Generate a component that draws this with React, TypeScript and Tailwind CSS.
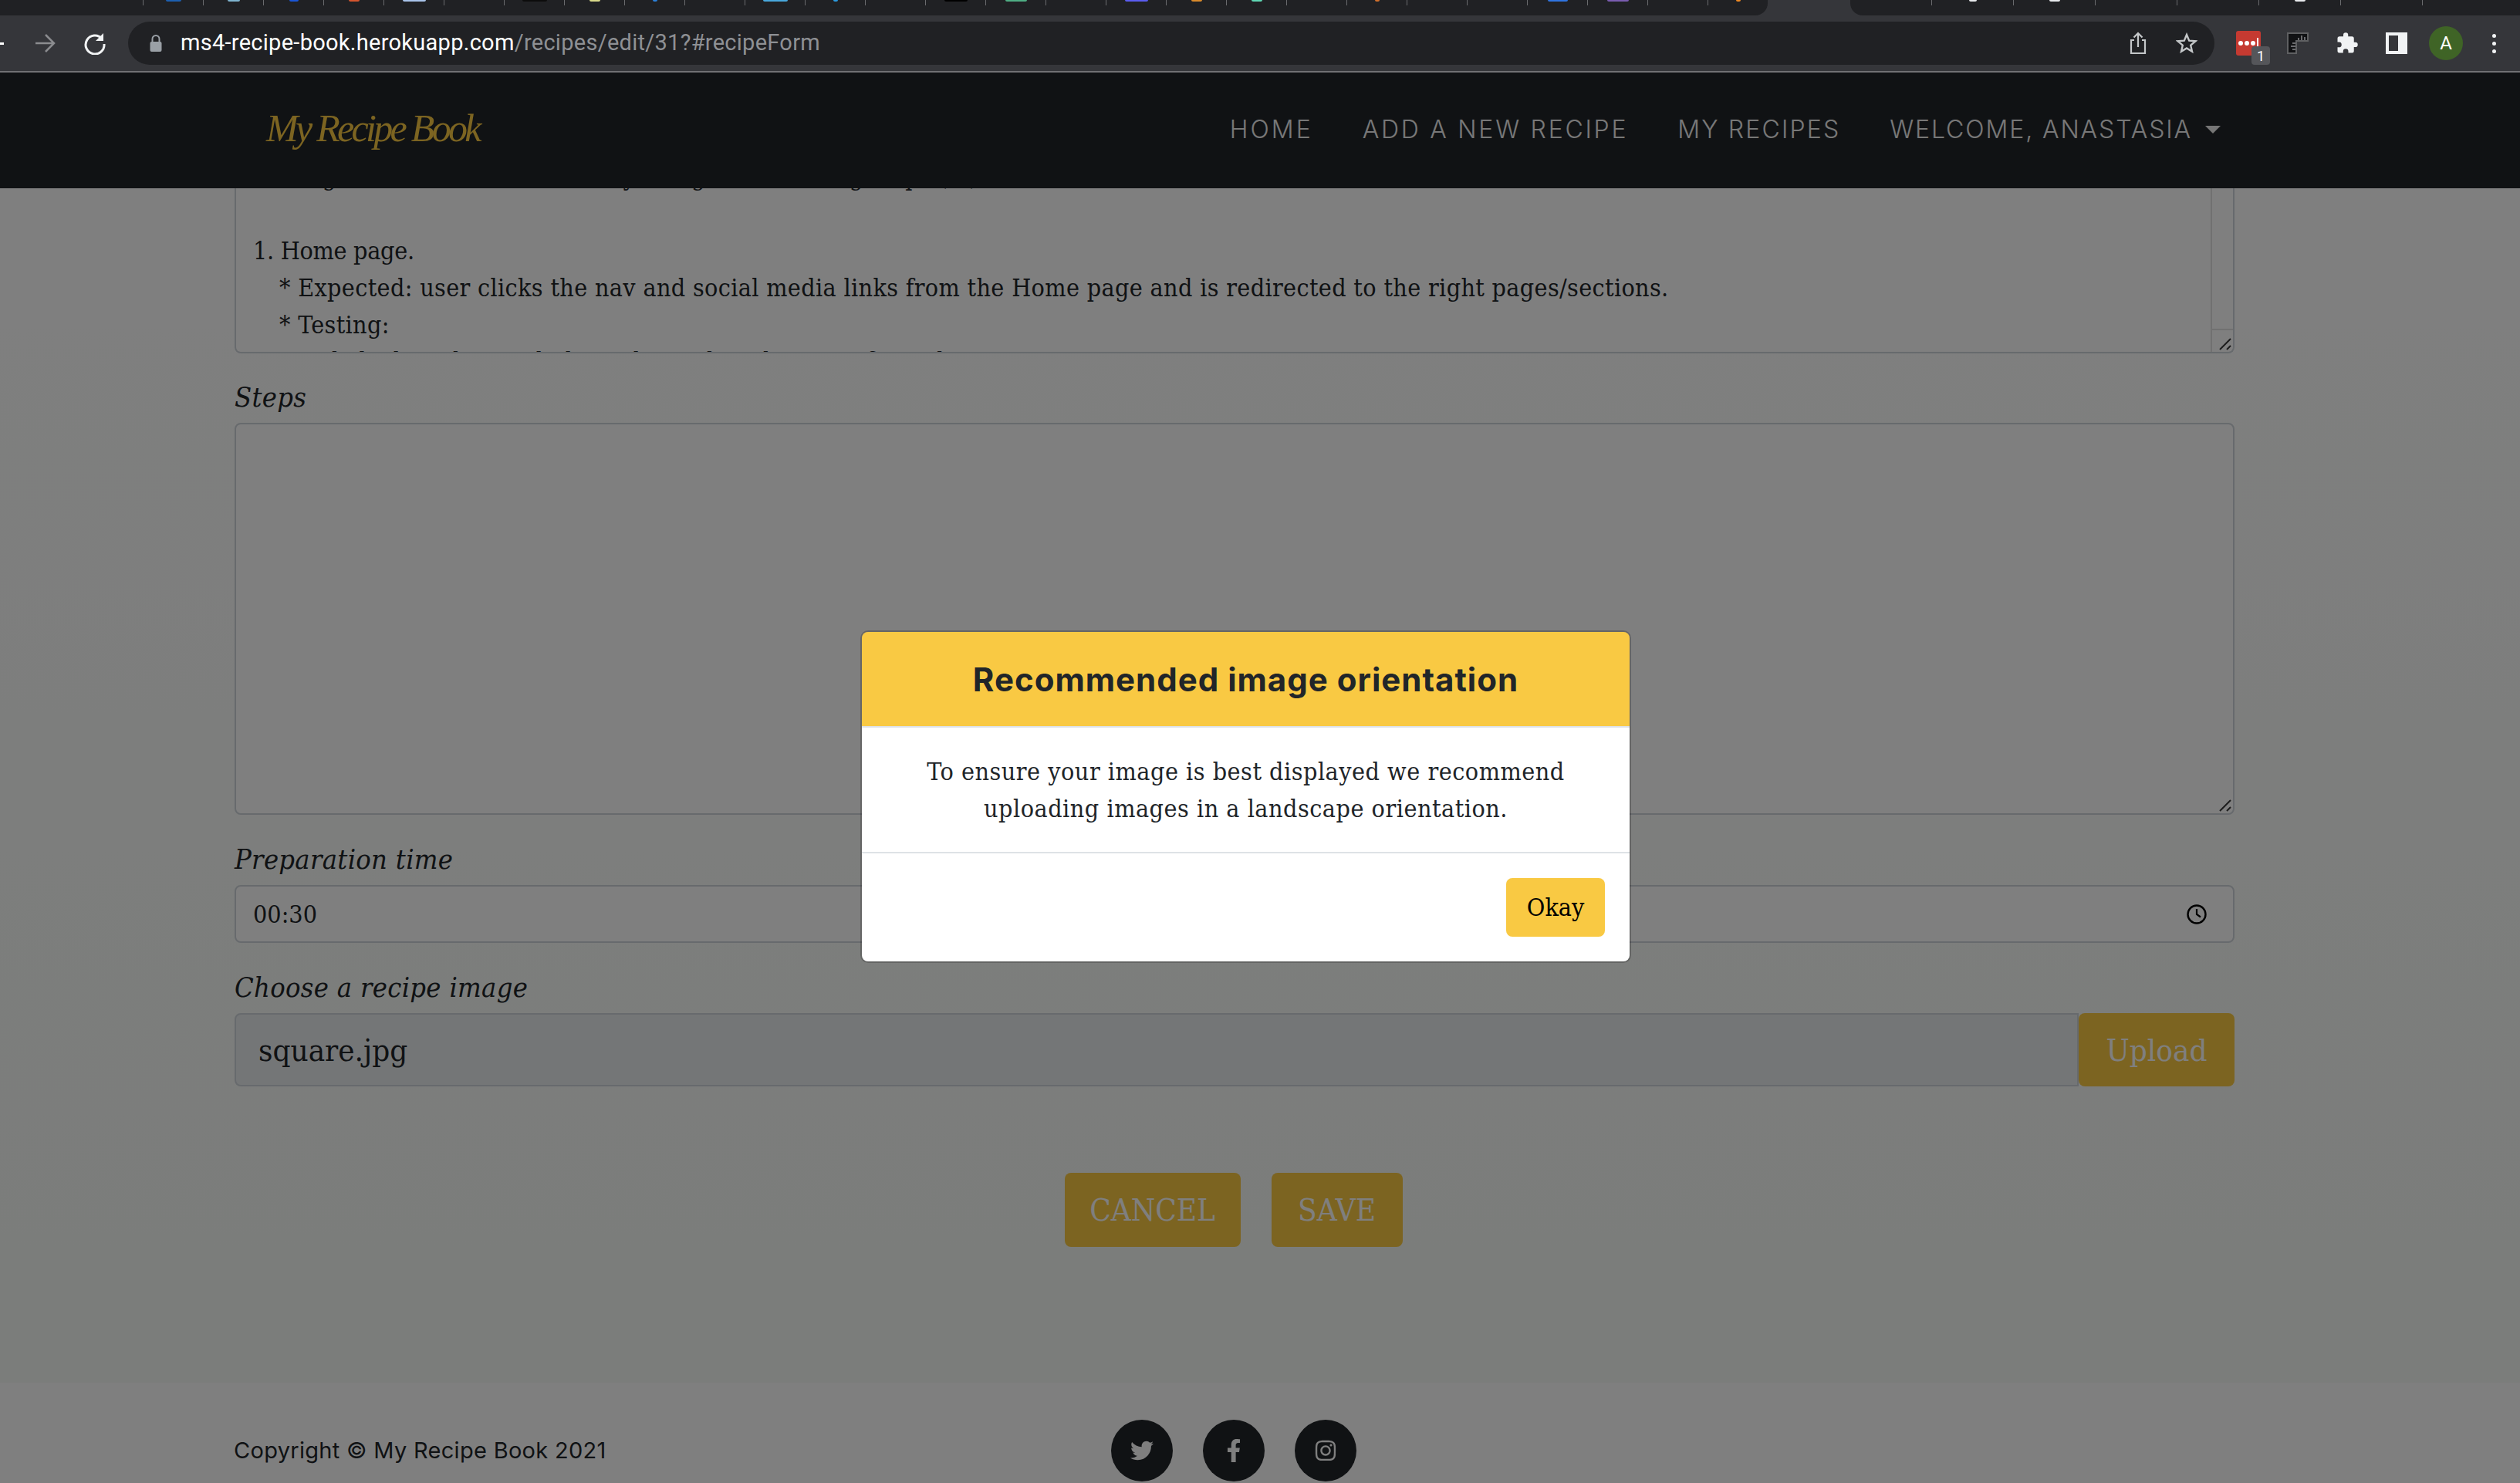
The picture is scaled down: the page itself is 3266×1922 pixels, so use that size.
import { FaFacebookF, FaInstagram, FaTwitter } from "react-icons/fa";

const slab = "font-['DejaVu_Serif_Condensed','DejaVu_Serif',serif]";
const sans = "font-['Inter','Open_Sans',sans-serif]";

const tabDots: Record<number, string> = {
  0: "w-[20px] bg-[#1c5fb0]",
  1: "w-[16px] bg-[#7fb4cf]",
  2: "w-[12px] bg-[#1a56d6]",
  3: "w-[14px] bg-[#d4552e]",
  4: "w-[30px] bg-[#a9c4ea]",
  6: "w-[32px] bg-[#0c0c0c]",
  7: "w-[14px] bg-[#d8d98a]",
  8: "w-[6px] bg-[#2b7fd8]",
  10: "w-[32px] bg-[#49a8dc]",
  11: "w-[6px] bg-[#2b9be0]",
  13: "w-[30px] bg-[#000000]",
  14: "w-[28px] bg-[#4fae84]",
  16: "w-[30px] bg-[#5a5cf0]",
  17: "w-[14px] bg-[#d98a2b]",
  18: "w-[14px] bg-[#5fd6b4]",
  20: "w-[6px] bg-[#d0702c]",
  23: "w-[26px] bg-[#2f74e0]",
  24: "w-[28px] bg-[#7a5cb0]",
  26: "w-[6px] bg-[#f08a24]",
};

const rightTabDots: Record<number, string> = { 0: "w-[10px]", 1: "w-[14px]", 4: "w-[14px]" };

function Grip() {
  return (
    <svg width="16" height="16" viewBox="0 0 16 16" className="block">
      <path d="M1 15 L15 1 M10 15 L15 10" stroke="#3a3a3a" strokeWidth="2" fill="none" />
    </svg>
  );
}

function TabStrip() {
  return (
    <div className="flex h-[20px] bg-[#35363a]">
      <div className="flex w-[2291px] rounded-br-[16px] bg-[#202124] pl-[185px]">
        {Array.from({ length: 27 }).map((_, i) => (
          <div key={i} className="flex h-[7px] w-[78px] justify-center border-l border-[#6a6b6e]">
            {tabDots[i] && <div className={`h-[2px] rounded-b-full ${tabDots[i]}`} />}
          </div>
        ))}
      </div>
      <div className="w-[107px]" />
      <div className="flex flex-1 rounded-bl-[16px] bg-[#202124] pl-[105px]">
        {Array.from({ length: 7 }).map((_, i) => (
          <div key={i} className="flex h-[7px] w-[106px] justify-center border-l border-[#6a6b6e]">
            {rightTabDots[i] && <div className={`h-[2px] rounded-b-full bg-[#e8eaed] ${rightTabDots[i]}`} />}
          </div>
        ))}
      </div>
    </div>
  );
}

function Toolbar() {
  return (
    <div className="flex h-[72px] items-center bg-[#35363a]">
      <div className="h-[3px] w-[5px] bg-white" />
      <svg width="28" height="28" viewBox="0 0 28 28" className="ml-[39px]">
        <path d="M2 14 H25 M15 3 L26 14 L15 25" stroke="#8b8c8f" strokeWidth="2.5" fill="none" />
      </svg>
      <svg width="30" height="30" viewBox="0 0 30 30" className="ml-[36px]">
        <path d="M24 9 A12 12 0 1 0 27 16" stroke="#f1f3f4" strokeWidth="3" fill="none" />
        <path d="M26 2 V12 H16 Z" fill="#f1f3f4" />
      </svg>
      <div className="ml-[28px] flex h-[56px] w-[2704px] items-center rounded-full bg-[#202124] pl-[27px] pr-[22px]">
        <svg width="18" height="24" viewBox="0 0 18 24">
          <path d="M4.5 11 V6.5 a4.5 4.5 0 0 1 9 0 V11" stroke="#9aa0a6" strokeWidth="2" fill="none" />
          <rect x="1.5" y="10" width="15" height="13" rx="2" fill="#9aa0a6" />
        </svg>
        <div className="ml-[23px] font-['Roboto',sans-serif] text-[29px] tracking-[0.28px] text-white">
          ms4-recipe-book.herokuapp.com<span className="text-[#8e9094]">/recipes/edit/31?#recipeForm</span>
        </div>
        <div className="ml-auto flex items-center gap-[39px]">
          <svg width="24" height="30" viewBox="0 0 24 30" className="translate-x-[2px]">
            <path d="M7 11 H3 V28 H21 V11 H17 M12 20 V2 M6.5 7.5 L12 2 L17.5 7.5" stroke="#c4c7c9" strokeWidth="2.2" fill="none" />
          </svg>
          <svg width="28" height="28" viewBox="0 0 28 28">
            <path d="M14 3 L17.2 10.6 L25.4 11.3 L19.2 16.7 L21 24.8 L14 20.5 L7 24.8 L8.8 16.7 L2.6 11.3 L10.8 10.6 Z" stroke="#c4c7c9" strokeWidth="2.4" fill="none" />
          </svg>
        </div>
      </div>
      <div className="relative ml-[28px] flex h-[32px] w-[32px] items-center justify-center gap-[2px] rounded-[3px] bg-[#c53a31] pr-[1px]">
        <div className="h-[6px] w-[6px] rounded-full bg-white" />
        <div className="h-[6px] w-[6px] rounded-full bg-white" />
        <div className="h-[6px] w-[6px] rounded-full bg-white" />
        <div className="h-[14px] w-[2px] bg-white" />
        <div className="absolute left-[20px] top-[20px] flex h-[24px] w-[24px] items-center justify-center rounded-[4px] bg-[#55565a] font-['Roboto',sans-serif] text-[18px] text-white">1</div>
      </div>
      <svg width="28" height="28" viewBox="0 0 28 28" className="ml-[34px]">
        <path d="M0 0 H28 V12 H13 V28 H0 Z" fill="#5f6062" />
        <path d="M2 2 H26 V10 H11 V26 H2 Z" fill="#111214" />
        <path d="M15 10 V7 M19 10 V4 M23 10 V6 M11 14 H7 M11 18 H5 M11 22 H7" stroke="#8b8c8f" strokeWidth="1.5" />
      </svg>
      <svg width="30" height="30" viewBox="0 0 24 24" className="ml-[35px]">
        <path fill="#f1f3f4" d="M20.5 11H19V7a2 2 0 0 0-2-2h-4V3.5a2.5 2.5 0 0 0-5 0V5H4a2 2 0 0 0-2 2v3.8h1.5a2.7 2.7 0 0 1 0 5.4H2V20a2 2 0 0 0 2 2h3.8v-1.5a2.7 2.7 0 0 1 5.4 0V22H17a2 2 0 0 0 2-2v-4h1.5a2.5 2.5 0 0 0 0-5z" />
      </svg>
      <div className="ml-[35px] flex h-[28px] w-[28px] border-[4px] border-r-[12px] border-[#f1f3f4]" />
      <div className="ml-[28px] flex h-[44px] w-[44px] items-center justify-center rounded-full bg-[#3f6426] font-['Roboto',sans-serif] text-[24px] text-white">A</div>
      <div className="ml-[38px] flex flex-col gap-[5px]">
        <div className="h-[5px] w-[5px] rounded-full bg-[#f1f3f4]" />
        <div className="h-[5px] w-[5px] rounded-full bg-[#f1f3f4]" />
        <div className="h-[5px] w-[5px] rounded-full bg-[#f1f3f4]" />
      </div>
    </div>
  );
}

function Navbar() {
  return (
    <nav className={`flex h-[150px] items-center justify-between bg-[#212529] pb-[3px] pl-[345px] pr-[388px] ${sans} text-[32px] font-light text-[#f0f0f0]`}>
      <div className="mb-[2px] font-['Liberation_Serif',serif] text-[50px] font-normal italic tracking-[-3.7px] text-[#f9c943]">My Recipe Book</div>
      <div className="flex items-center gap-[64px]">
        <span className="tracking-[3px]">HOME</span>
        <span className="tracking-[2.75px]">ADD A NEW RECIPE</span>
        <span className="tracking-[2.15px]">MY RECIPES</span>
        <span className="flex items-center gap-[17px] tracking-[1.9px]">
          WELCOME, ANASTASIA
          <span className="h-0 w-0 border-x-[10px] border-t-[10px] border-x-transparent border-t-[#ececec]" />
        </span>
      </div>
    </nav>
  );
}

function FormLabel({ text, className }: { text: string; className: string }) {
  return <div className={`h-[54px] text-[36px] leading-[54px] italic tracking-[0.3px] text-[#212529] ${className}`}>{text}</div>;
}

function RecipeForm() {
  return (
    <main className={`h-[1548px] bg-linear-to-b from-[#ffffff] to-[#f6faf6] pl-[304px] pr-[370px] ${slab}`}>
      <div className="flex h-[214px] overflow-hidden rounded-b-[8px] border-x-2 border-b-2 border-[#ced4da] bg-white">
        <div className="flex-1 overflow-hidden pl-[22px] text-[32px] leading-[48px] tracking-[0.33px] text-[#212529]">
          <div className="mt-[-39px]">
            <div>Testing was carried out manually using the following steps (...)</div>
            <div>&nbsp;</div>
            <div className="tracking-[-0.3px]">1. Home page.</div>
            <div className="pl-[34px]">* Expected: user clicks the nav and social media links from the Home page and is redirected to the right pages/sections.</div>
            <div className="pl-[34px]">* Testing:</div>
            <div className="mt-[-1px] pl-[60px]">- Clicked on the nav links and social media icons from the Home page.</div>
          </div>
        </div>
        <div className="flex w-[29px] flex-col justify-end border-l-2 border-[#e3e3e3]">
          <div className="flex h-[30px] items-end justify-end border-t-2 border-[#e3e3e3] pb-[2px] pr-[2px]">
            <Grip />
          </div>
        </div>
      </div>

      <FormLabel text="Steps" className="mt-[30px] mb-[6px]" />
      <div className="flex h-[508px] items-end justify-end rounded-[8px] border-2 border-[#ced4da] bg-white pb-[2px] pr-[2px]">
        <Grip />
      </div>

      <FormLabel text="Preparation time" className="mt-[31px] mb-[6px]" />
      <div className="flex h-[75px] items-center justify-between rounded-[8px] border-2 border-[#ced4da] bg-white pl-[22px] pr-[34px] text-[32px] text-[#212529]">
        <span>00:30</span>
        <svg width="26" height="26" viewBox="0 0 26 26">
          <circle cx="13" cy="13" r="11.5" stroke="#000" strokeWidth="2.4" fill="none" />
          <path d="M13 6 V13 L18 16.5" stroke="#000" strokeWidth="2.2" fill="none" />
        </svg>
      </div>

      <FormLabel text="Choose a recipe image" className="mt-[31px] mb-[6px]" />
      <div className="flex h-[95px]">
        <div className="flex flex-1 items-center rounded-l-[8px] border-2 border-[#ced4da] bg-[#e9ecef] pl-[29px] text-[40px] text-[#212529]">square.jpg</div>
        <div className="flex w-[202px] items-center justify-center rounded-[8px] bg-[#f9c943] text-[40px] text-white">Upload</div>
      </div>

      <div className="mt-[112px] flex justify-center gap-[40px] pr-[3px] text-[40px] text-white">
        <div className="flex h-[96px] w-[228px] items-center justify-center rounded-[8px] bg-[#f9c943]">CANCEL</div>
        <div className="flex h-[96px] w-[170px] items-center justify-center rounded-[8px] bg-[#f9c943]">SAVE</div>
      </div>
    </main>
  );
}

function SiteFooter() {
  return (
    <footer className="h-[130px] bg-white pl-[303px] pt-[48px]">
      <div className="flex h-[80px] items-center">
        <div className={`w-[1137px] ${sans} text-[29px] tracking-[0.3px] text-[#212529]`}>Copyright © My Recipe Book 2021</div>
        <div className="flex gap-[39px] text-[30px] text-white">
          <div className="flex h-[80px] w-[80px] items-center justify-center rounded-full bg-[#212529]"><FaTwitter /></div>
          <div className="flex h-[80px] w-[80px] items-center justify-center rounded-full bg-[#212529]"><FaFacebookF /></div>
          <div className="flex h-[80px] w-[80px] items-center justify-center rounded-full bg-[#212529]"><FaInstagram /></div>
        </div>
      </div>
    </footer>
  );
}

function ImageModal() {
  return (
    <div className="absolute left-[1115px] top-[723px] w-[999px] overflow-hidden rounded-[10px] border-2 border-black/20 bg-clip-padding">
      <div className={`flex h-[124px] items-center justify-center border-b-2 border-[#dee2e6] bg-[#f9c943] ${sans} text-[42px] font-bold tracking-[1px] text-[#212529]`}>
        Recommended image orientation
      </div>
      <div className={`bg-white ${slab}`}>
        <div className="flex h-[161px] flex-col items-center justify-center text-[32px] leading-[48px] tracking-[0.5px] text-[#212529]">
          <div>To ensure your image is best displayed we recommend</div>
          <div>uploading images in a landscape orientation.</div>
        </div>
        <div className="flex h-[142px] justify-end border-t-2 border-[#dee2e6] pr-[32px] pt-[32px]">
          <div className="flex h-[76px] w-[128px] items-center justify-center rounded-[8px] bg-[#f9c943] text-[32px] text-black">Okay</div>
        </div>
      </div>
    </div>
  );
}

export default function App() {
  return (
    <div className="h-[1922px] w-[3266px] overflow-hidden bg-white">
      <TabStrip />
      <Toolbar />
      <div className="h-[2px] bg-[#707174]" />
      <div className="relative">
        <Navbar />
        <RecipeForm />
        <SiteFooter />
        <div className="absolute inset-0 bg-black/50" />
        <ImageModal />
      </div>
    </div>
  );
}
